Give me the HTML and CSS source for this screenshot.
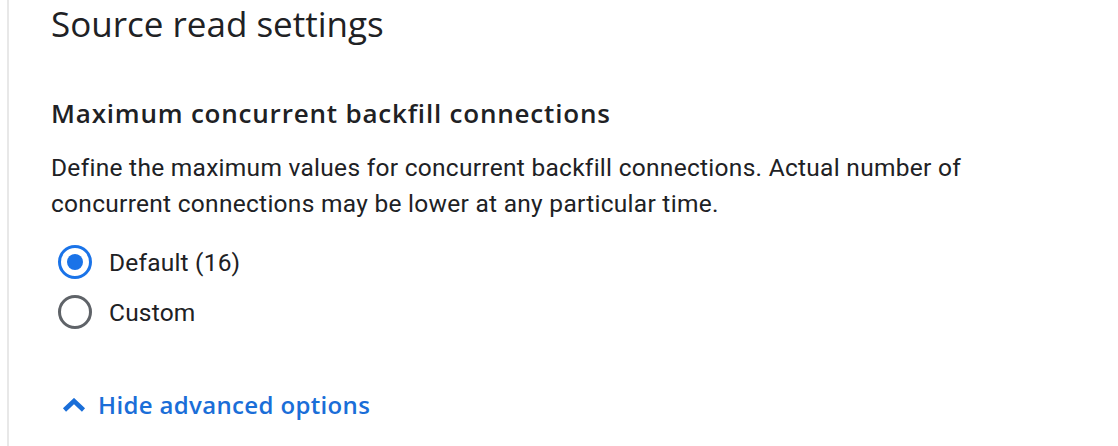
FILE: index.html
```html
<!DOCTYPE html>
<html lang="en">
<head>
    <meta charset="UTF-8">
    <meta name="viewport" content="width=device-width, initial-scale=1.0">
    <link rel="stylesheet" href="styles.css">
    <title>Source read settings</title>
</head>
<body>
    <div class="panel">
        <h1 class="panel-title">Source read settings</h1>

        <h2 class="section-title">Maximum concurrent backfill connections</h2>
        <p class="section-desc">Define the maximum values for concurrent backfill connections. Actual number of concurrent connections may be lower at any particular time.</p>

        <div class="radio-group">
            <label class="radio-row">
                <input type="radio" name="backfill" class="radio" checked>
                <span class="radio-label">Default (16)</span>
            </label>
            <label class="radio-row">
                <input type="radio" name="backfill" class="radio">
                <span class="radio-label">Custom</span>
            </label>
        </div>

        <a href="#" class="advanced-toggle">
            <svg class="chevron" width="24" height="14" viewBox="0 0 24 14">
                <polyline points="2.5,12 12,3 21.5,12" fill="none" stroke="currentColor" stroke-width="4.5"/>
            </svg>
            <span>Hide advanced options</span>
        </a>
    </div>
</body>
</html>
```

FILE: styles.css
```css
body {
    margin: 0;
    background-color: #fff;
    color: #202124;
}

.panel {
    margin-left: 7px;
    border-left: 2px solid #e8e8e8;
    padding-left: 42px;
    min-height: 446px;
    box-sizing: border-box;
}

.panel-title {
    font-family: "Open Sans", sans-serif;
    font-weight: 400;
    font-size: 35px;
    line-height: 48px;
    margin: 0;
}

.section-title {
    font-family: "Open Sans", sans-serif;
    font-weight: 600;
    font-size: 26px;
    letter-spacing: 0.8px;
    line-height: 36px;
    margin: 47px 0 0;
}

.section-desc {
    font-family: Roboto, sans-serif;
    font-size: 24.5px;
    letter-spacing: 0.28px;
    line-height: 36px;
    max-width: 960px;
    margin: 19px 0 0;
}

.radio-group {
    margin-top: 15px;
}

.radio-row {
    display: flex;
    align-items: center;
    height: 50px;
    cursor: pointer;
}

.radio {
    appearance: none;
    margin: 0 17px 0 7px;
    width: 34px;
    height: 34px;
    border: 3px solid #5f6368;
    border-radius: 50%;
    box-sizing: border-box;
    display: flex;
    align-items: center;
    justify-content: center;
}

.radio:checked {
    border-color: #1a73e8;
}

.radio:checked::after {
    content: "";
    width: 16px;
    height: 16px;
    border-radius: 50%;
    background-color: #1a73e8;
}

.radio-label {
    font-family: Roboto, sans-serif;
    font-size: 24.5px;
    letter-spacing: 0.2px;
}

.advanced-toggle {
    display: inline-flex;
    align-items: center;
    gap: 12px;
    margin-top: 50px;
    color: #1a6ed8;
    text-decoration: none;
    font-family: "Open Sans", sans-serif;
    font-weight: 600;
    font-size: 24px;
    letter-spacing: 0.35px;
    line-height: 36px;
}

.chevron {
    margin-left: 11px;
}
```
